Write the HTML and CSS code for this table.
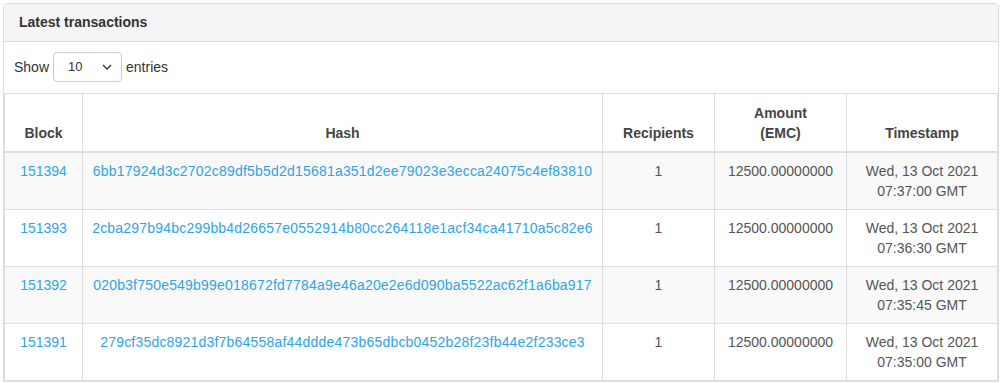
FILE: index.html
```html
<!DOCTYPE html>
<html>
<head>
<meta charset="utf-8">
<title>Latest transactions</title>
<link rel="stylesheet" href="styles.css">
</head>
<body>
<div class="panel">
  <div class="panel-heading">Latest transactions</div>
  <div class="length">
    <span>Show</span>
    <div class="select"><span>10</span>
      <svg width="10" height="6" viewBox="0 0 10 6"><path d="M1 1l4 4 4-4" fill="none" stroke="#333" stroke-width="1.3"/></svg>
    </div>
    <span>entries</span>
  </div>
  <table class="tx">
    <colgroup>
      <col class="c-block"><col class="c-hash"><col class="c-rec"><col class="c-amt"><col class="c-ts">
    </colgroup>
    <thead>
      <tr><th>Block</th><th>Hash</th><th>Recipients</th><th>Amount<br>(EMC)</th><th>Timestamp</th></tr>
    </thead>
    <tbody>
      <tr class="odd"><td><a href="#">151394</a></td><td><a class="hash" href="#">6bb17924d3c2702c89df5b5d2d15681a351d2ee79023e3ecca24075c4ef83810</a></td><td>1</td><td>12500.00000000</td><td>Wed, 13 Oct 2021<br>07:37:00 GMT</td></tr>
      <tr><td><a href="#">151393</a></td><td><a class="hash" href="#">2cba297b94bc299bb4d26657e0552914b80cc264118e1acf34ca41710a5c82e6</a></td><td>1</td><td>12500.00000000</td><td>Wed, 13 Oct 2021<br>07:36:30 GMT</td></tr>
      <tr class="odd"><td><a href="#">151392</a></td><td><a class="hash" href="#">020b3f750e549b99e018672fd7784a9e46a20e2e6d090ba5522ac62f1a6ba917</a></td><td>1</td><td>12500.00000000</td><td>Wed, 13 Oct 2021<br>07:35:45 GMT</td></tr>
      <tr><td><a href="#">151391</a></td><td><a class="hash" href="#">279cf35dc8921d3f7b64558af44ddde473b65dbcb0452b28f23fb44e2f233ce3</a></td><td>1</td><td>12500.00000000</td><td>Wed, 13 Oct 2021<br>07:35:00 GMT</td></tr>
    </tbody>
  </table>
</div>
</body>
</html>
```

FILE: styles.css
```css
html, body { background: #fff; }
body {
  margin: 3px 4px 0 3px;
  font-family: "Liberation Sans", Arial, sans-serif;
  font-size: 14px;
  line-height: 20px;
  color: #555;
}
.panel {
  border: 1px solid #ddd;
  border-radius: 4px 4px 0 0;
  background: #fff;
}
.panel-heading {
  background: #f5f5f5;
  border-bottom: 1px solid #ddd;
  padding: 10px 15px 10px 15px;
  line-height: 17px;
  font-size: 14px;
  font-weight: bold;
  color: #333;
  border-radius: 3px 3px 0 0;
}
.length {
  display: flex;
  align-items: center;
  gap: 4px;
  padding: 10px 10px 11px 10px;
  color: #333;
}
.select {
  box-sizing: border-box;
  width: 69px;
  height: 30px;
  border: 1px solid #ccc;
  border-radius: 4px;
  display: flex;
  align-items: center;
  justify-content: space-between;
  padding: 0 9px 0 14px;
  font-size: 13px;
  color: #333;
}
.tx {
  width: 100%;
  border-collapse: collapse;
  table-layout: fixed;
}
.c-block { width: 78px; }
.c-hash { width: 520px; }
.c-rec { width: 112px; }
.c-amt { width: 132px; }
.c-ts { width: 151px; }
.tx th, .tx td {
  border: 1px solid #ddd;
  padding: 8px;
  text-align: center;
}
.tx th {
  vertical-align: bottom;
  border-bottom-width: 2px;
  font-weight: bold;
  color: #444;
  padding-top: 9px;
}
.tx td { vertical-align: top; height: 40px; }
.tx tr.odd td { background: #f9f9f9; }
.tx a { color: #2fa4e7; text-decoration: none; }
.tx a.hash { letter-spacing: 0.2px; }
```
